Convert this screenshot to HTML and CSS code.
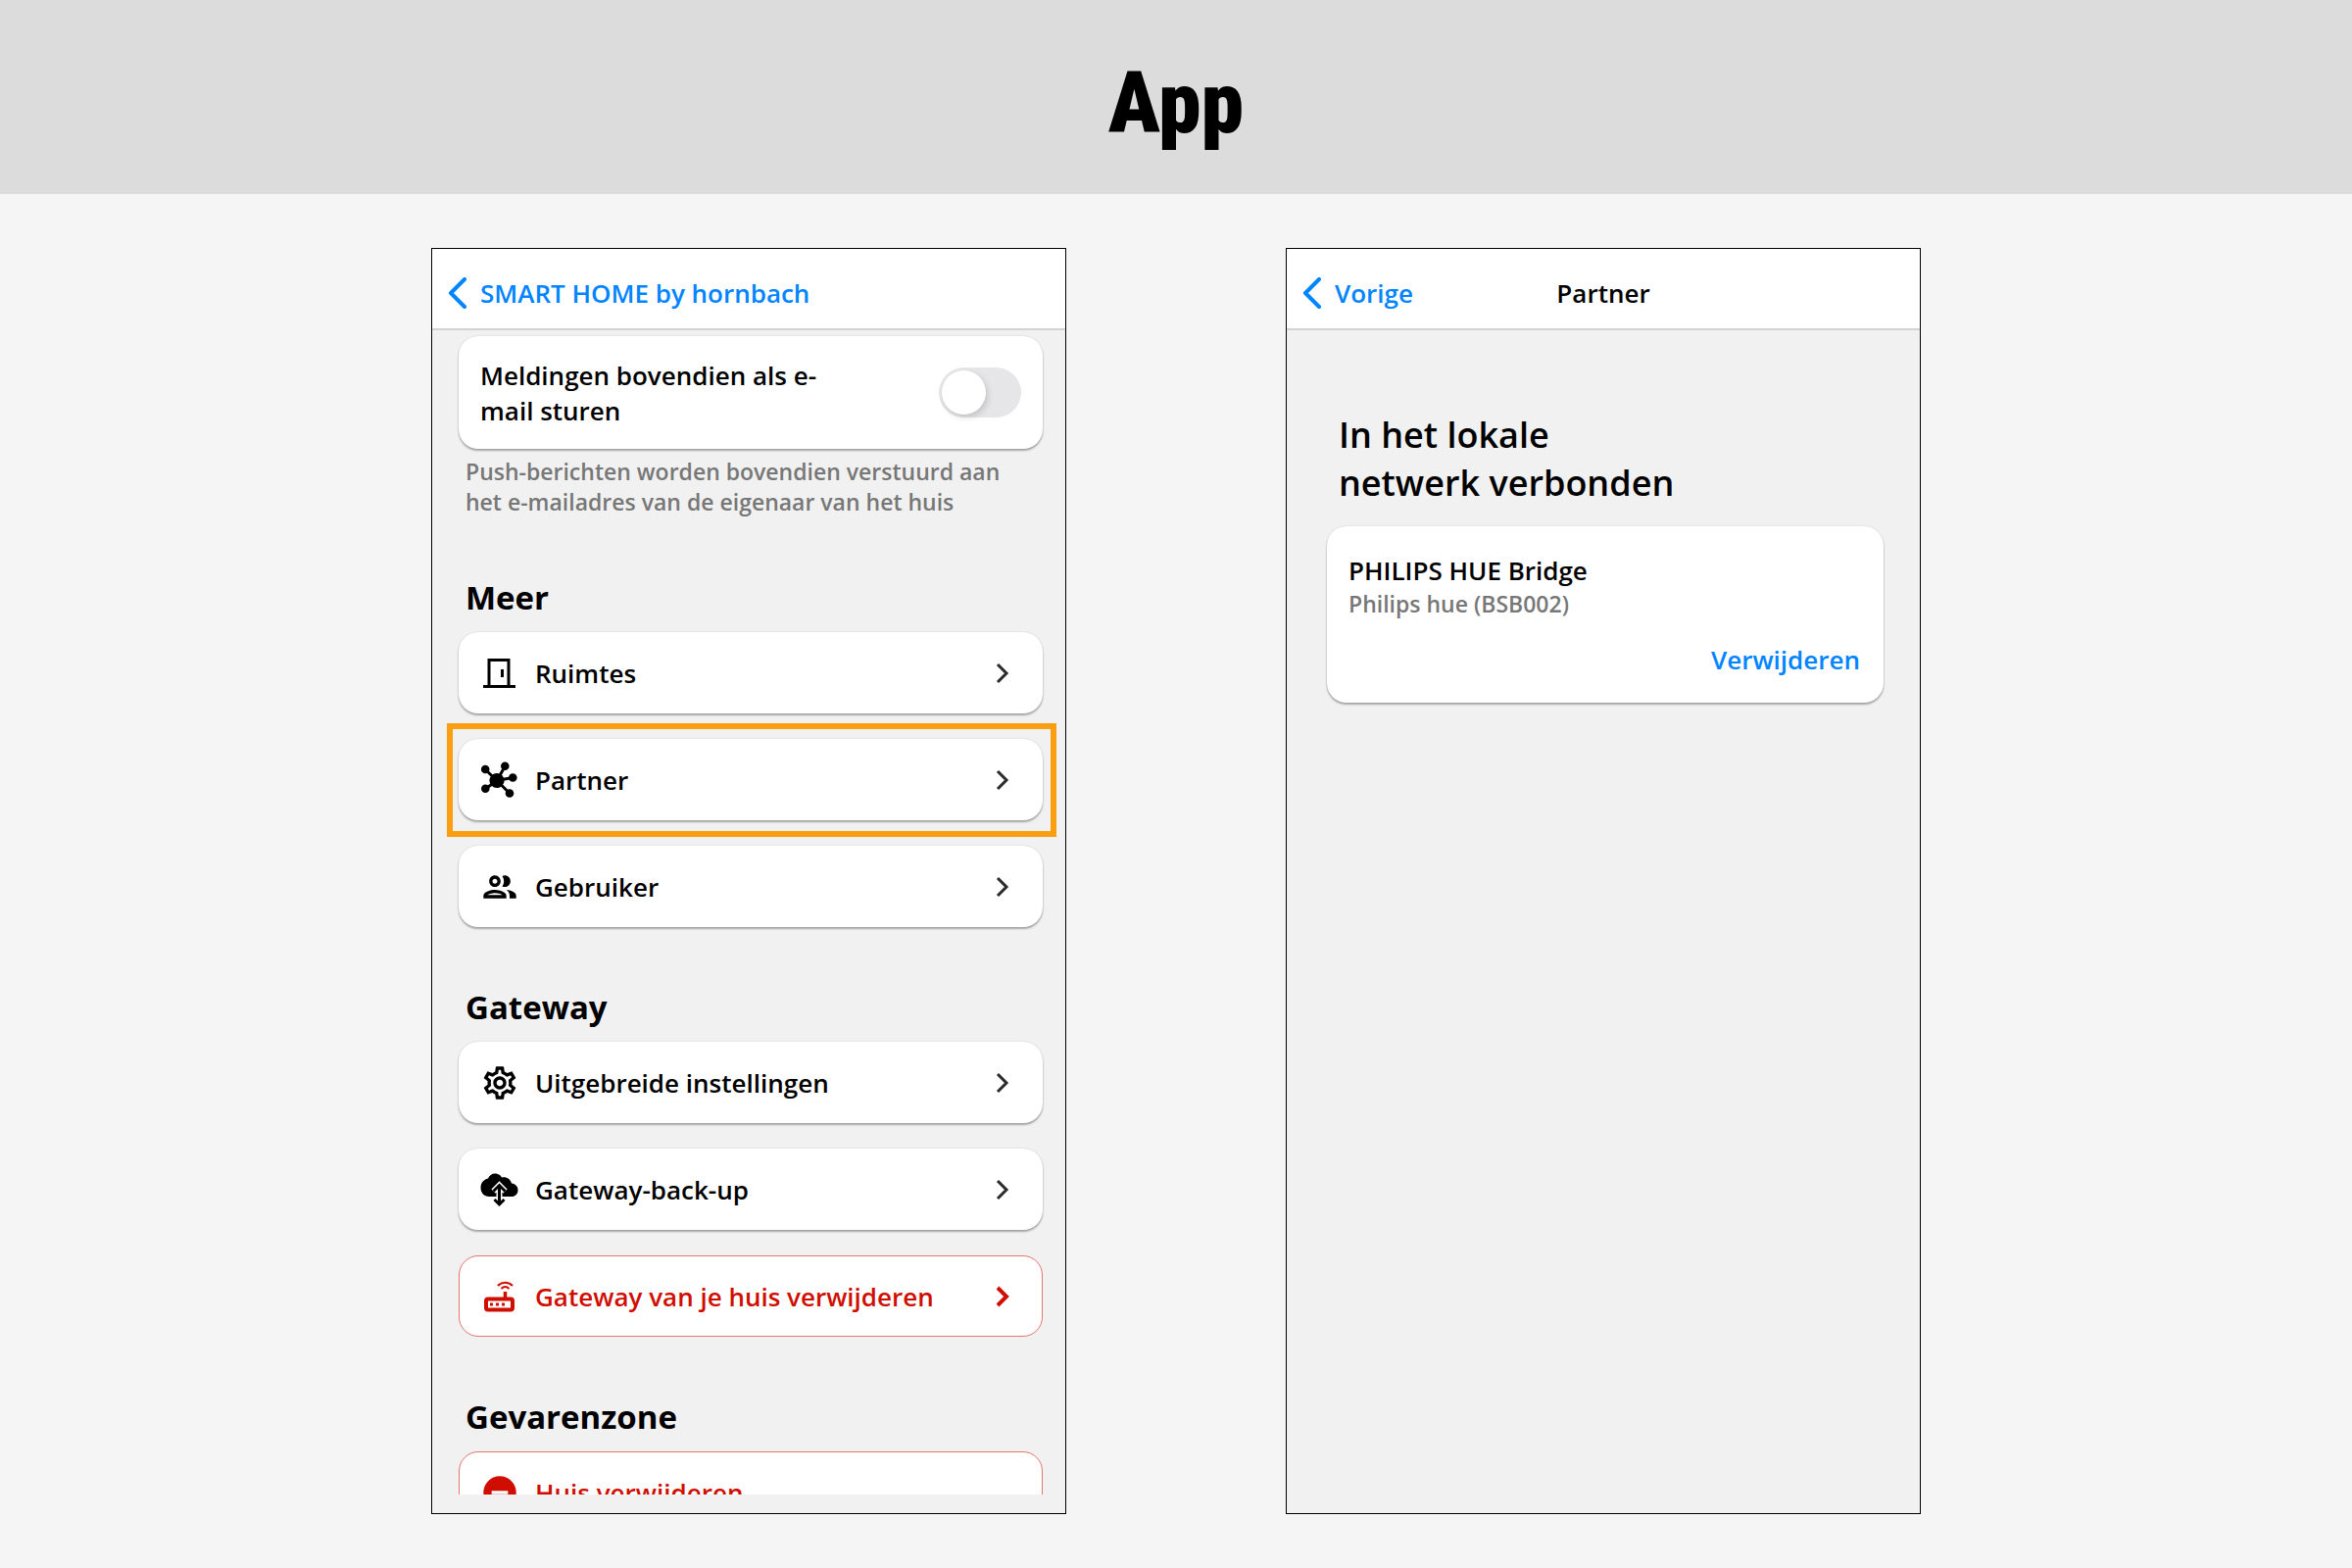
FILE: index.html
```html
<!DOCTYPE html>
<html lang="nl">
<head>
  <meta charset="UTF-8" />
  <meta name="viewport" content="width=device-width, initial-scale=1.0" />
  <title>App</title>
  <link rel="stylesheet" href="styles.css">
</head>
<body>
  <header class="banner">
    <h1>App</h1>
  </header>

  <main class="phones">
    <!-- Settings -->
    <section class="phone">
      <nav class="topbar">
        <a class="back" href="#">
          <svg viewBox="0 0 20 32"><path d="M17 2 3 16l14 14"/></svg>
          SMART HOME by hornbach
        </a>
      </nav>
      <div class="screen">
        <label class="card toggle-card" for="mail">
          <span>Meldingen bovendien als e-<br>mail sturen</span>
          <input type="checkbox" class="switch" id="mail">
        </label>
        <p class="hint">Push-berichten worden bovendien verstuurd aan<br>het e-mailadres van de eigenaar van het huis</p>

        <h2>Meer</h2>
        <div class="rows">
          <a class="card row" href="#">
            <svg class="icon" viewBox="0 0 40 40"><path d="M9 33V6.500h20V33" fill="none" stroke="currentColor" stroke-width="3"/><path d="M3 32h33v3H3zM21 16h3v8h-3z"/></svg>
            <span>Ruimtes</span>
            <svg class="chevron" viewBox="0 0 14 22"><path d="m2 2 9 9-9 9"/></svg>
          </a>
          <a class="card row marked" href="#">
            <svg class="icon" viewBox="0 0 40 40">
              <path d="M5 9 17 20.500 25.300 6M17 20.500 33.300 17.500M5.300 29 17 20.500 30 33.500" fill="none" stroke="currentColor" stroke-width="3"/>
              <circle cx="17" cy="20.500" r="7.600"/><circle cx="5.200" cy="9" r="4.300"/><circle cx="25.300" cy="5.800" r="4.300"/>
              <circle cx="33.300" cy="17.500" r="4.300"/><circle cx="5.300" cy="28.800" r="4.300"/><circle cx="30" cy="33.500" r="4.300"/>
            </svg>
            <span>Partner</span>
            <svg class="chevron" viewBox="0 0 14 22"><path d="m2 2 9 9-9 9"/></svg>
          </a>
          <a class="card row" href="#">
            <svg class="icon" viewBox="0 0 24 24"><path d="M9 13.750c-2.340 0-7 1.170-7 3.500V19h14v-1.750c0-2.330-4.660-3.500-7-3.500zM4.340 17c.84-.58 2.870-1.250 4.660-1.250s3.820.67 4.660 1.250H4.340zM9 12c1.930 0 3.500-1.570 3.500-3.500S10.930 5 9 5 5.500 6.570 5.500 8.500 7.070 12 9 12zm0-5c.83 0 1.500.67 1.500 1.500S9.830 10 9 10s-1.500-.67-1.500-1.500S8.170 7 9 7zm7.040 6.810c1.160.84 1.960 1.960 1.960 3.440V19h4v-1.750c0-2.020-3.500-3.170-5.960-3.440zM15 12c1.930 0 3.500-1.570 3.500-3.500S16.930 5 15 5c-.54 0-1.040.13-1.500.35.63.89 1 1.980 1 3.150s-.37 2.260-1 3.150c.46.22.96.35 1.500.35z"/></svg>
            <span>Gebruiker</span>
            <svg class="chevron" viewBox="0 0 14 22"><path d="m2 2 9 9-9 9"/></svg>
          </a>
        </div>

        <h2>Gateway</h2>
        <div class="rows">
          <a class="card row" href="#">
            <svg class="icon" viewBox="0 0 24 24"><path d="M19.430 12.980c.04-.32.07-.64.07-.98 0-.34-.03-.66-.07-.98l2.110-1.650c.19-.15.24-.42.12-.64l-2-3.460c-.09-.16-.26-.25-.44-.25-.06 0-.12.01-.17.03l-2.490 1c-.52-.4-1.080-.73-1.690-.98l-.38-2.650C14.460 2.180 14.250 2 14 2h-4c-.25 0-.46.18-.49.42l-.38 2.650c-.61.25-1.170.59-1.690.98l-2.490-1c-.06-.02-.12-.03-.18-.03-.17 0-.34.09-.43.25l-2 3.460c-.13.22-.07.49.12.64l2.110 1.650c-.04.32-.07.65-.07.98 0 .33.03.66.07.98l-2.110 1.650c-.19.15-.24.42-.12.64l2 3.460c.09.16.26.25.44.25.06 0 .12-.01.17-.03l2.490-1c.52.4 1.080.73 1.690.98l.38 2.650c.03.24.24.42.49.42h4c.25 0 .46-.18.49-.42l.38-2.650c.61-.25 1.170-.59 1.690-.98l2.490 1c.06.02.12.03.18.03.17 0 .34-.09.43-.25l2-3.460c.12-.22.07-.49-.12-.64l-2.110-1.650zm-1.980-1.710c.04.31.05.52.05.73 0 .21-.02.43-.05.73l-.14 1.130.89.7 1.080.84-.7 1.210-1.270-.51-1.040-.42-.9.68c-.43.32-.84.56-1.250.73l-1.060.43-.16 1.130-.2 1.350h-1.400l-.19-1.350-.16-1.130-1.060-.43c-.43-.18-.83-.41-1.230-.71l-.91-.7-1.060.43-1.270.51-.7-1.210 1.080-.84.89-.7-.14-1.130c-.03-.31-.05-.54-.05-.74s.02-.43.05-.73l.14-1.130-.89-.7-1.080-.84.7-1.210 1.270.51 1.040.42.9-.68c.43-.32.84-.56 1.250-.73l1.060-.43.16-1.130.2-1.350h1.390l.19 1.350.16 1.130 1.060.43c.43.18.83.41 1.230.71l.91.7 1.060-.43 1.270-.51.7 1.210-1.070.85-.89.7.14 1.130zM12 8c-2.210 0-4 1.790-4 4s1.790 4 4 4 4-1.790 4-4-1.790-4-4-4zm0 6c-1.100 0-2-.9-2-2s.9-2 2-2 2 .9 2 2-.9 2-2 2z"/></svg>
            <span>Uitgebreide instellingen</span>
            <svg class="chevron" viewBox="0 0 14 22"><path d="m2 2 9 9-9 9"/></svg>
          </a>
          <a class="card row" href="#">
            <svg class="icon" viewBox="0 0 40 40">
              <path d="M9 27C4 27 .5 23 .5 18 .5 13 3.500 9.500 8 8.500 9 5.500 12 3.500 15 3.500c3 0 5.500 1.500 7 4 5-1 9 2 10 6 4 .5 6.500 3 6.500 7s-3 6.500-6.500 6.500z"/>
              <path d="M19.500 16v18M13.500 21.500l6-6 6 6M14.500 30l5 5 5-5" fill="none" stroke="#fff" stroke-width="6"/>
              <path d="M19.500 16v18M13.500 21.500l6-6 6 6M14.500 30l5 5 5-5" fill="none" stroke="currentColor" stroke-width="3"/>
            </svg>
            <span>Gateway-back-up</span>
            <svg class="chevron" viewBox="0 0 14 22"><path d="m2 2 9 9-9 9"/></svg>
          </a>
          <a class="card row danger" href="#">
            <svg class="icon" viewBox="0 0 40 40">
              <g fill="none" stroke="currentColor"><rect x="6" y="22.500" width="27" height="11" rx="2" stroke-width="4"/><path d="M25.500 22v-7" stroke-width="3.500"/><path d="M18 9c4-4.500 11-4.500 15 0M21.500 12c2.500-2.500 5.500-2.500 8 0" stroke-width="2"/></g>
              <path d="M10 26.500h3v3h-3zM16 26.500h3v3h-3zM22 26.500h3v3h-3z"/>
            </svg>
            <span>Gateway van je huis verwijderen</span>
            <svg class="chevron" viewBox="0 0 14 22"><path d="m2 2 9 9-9 9"/></svg>
          </a>
        </div>

        <h2>Gevarenzone</h2>
        <div class="rows">
          <a class="card row danger" href="#">
            <svg class="icon" viewBox="0 0 24 24"><path d="M12 2a10 10 0 1 0 0 20 10 10 0 0 0 0-20zm5 11H7v-2h10z"/></svg>
            <span>Huis verwijderen</span>
          </a>
        </div>
      </div>
    </section>

    <!-- Partner -->
    <section class="phone">
      <nav class="topbar">
        <a class="back" href="#">
          <svg viewBox="0 0 20 32"><path d="M17 2 3 16l14 14"/></svg>
          Vorige
        </a>
        <span class="topbar-title">Partner</span>
      </nav>
      <div class="screen partner">
        <h2 class="big">In het lokale<br>netwerk verbonden</h2>
        <div class="card device">
          <h3>PHILIPS HUE Bridge</h3>
          <p>Philips hue (BSB002)</p>
          <button type="button">Verwijderen</button>
        </div>
      </div>
    </section>
  </main>
</body>
</html>
```
FILE: styles.css
```css
* {
  box-sizing: border-box;
}
body {
  margin: 0;
  height: 100vh;
  display: flex;
  flex-direction: column;
  background-color: #f5f5f5;
  color: #000;
  font-family: "Open Sans", sans-serif;
  font-size: 26px;
  font-weight: 600;
  line-height: 36px;
}
h1, h2, h3, p {
  margin: 0;
}
a {
  color: inherit;
  text-decoration: none;
}
.banner {
  flex: none;
  height: 198px;
  padding-top: 12px;
  display: flex;
  align-items: center;
  justify-content: center;
  background-color: #dcdcdc;
}
.banner h1 {
  font-family: "Roboto Condensed", Roboto, sans-serif;
  font-size: 88px;
  line-height: 100px;
  font-weight: 900;
}
.phones {
  flex: 1;
  min-height: 0;
  width: 90%;
  max-width: 1520px;
  margin: 0 auto;
  padding: 55px 0;
  display: grid;
  grid-template-columns: 1fr 1fr;
  grid-template-rows: minmax(0, 1fr);
  gap: 224px;
}
.phone {
  display: flex;
  flex-direction: column;
  border: 1px solid #000;
  background-color: #f1f1f1;
  padding-bottom: 19px;
}
.topbar {
  flex: none;
  height: 83px;
  padding: 8px 16px 0;
  display: grid;
  grid-template-columns: 1fr auto 1fr;
  align-items: center;
  background-color: #fff;
  border-bottom: 2px solid #d2d2d2;
}
.back {
  display: flex;
  align-items: center;
  gap: 13px;
  color: #0084ff;
  white-space: nowrap;
}
.back svg {
  width: 20px;
  height: 32px;
  fill: none;
  stroke: currentColor;
  stroke-width: 4;
  stroke-linecap: round;
  stroke-linejoin: round;
}
.screen {
  flex: 1;
  min-height: 0;
  overflow: hidden;
  padding: 6px 23px 0 27px;
}
.card {
  display: block;
  background-color: #fff;
  border-radius: 20px;
  box-shadow: 0 2px 2px rgba(0, 0, 0, 0.3), 0 0 2px rgba(0, 0, 0, 0.15);
}
.toggle-card {
  height: 115px;
  padding: 0 22px;
  display: flex;
  align-items: center;
  justify-content: space-between;
}
.switch {
  appearance: none;
  width: 84px;
  height: 51px;
  margin: 0;
  padding: 3px;
  border-radius: 26px;
  background-color: #e6e6e8;
}
.switch::before {
  content: "";
  display: block;
  width: 45px;
  height: 45px;
  border-radius: 50%;
  background-color: #fff;
  box-shadow: 2px 3px 6px rgba(0, 0, 0, 0.15);
}
.switch:checked {
  background-color: #0084ff;
}
.switch:checked::before {
  margin-left: auto;
}
.hint {
  padding: 8px 7px 0;
  color: #777;
  font-size: 23px;
  line-height: 31px;
}
h2 {
  padding: 0 7px;
  margin: 60px 0 13px;
  font-size: 33px;
  line-height: 44px;
  font-weight: bold;
}
.rows {
  display: grid;
  gap: 26px;
}
.row {
  position: relative;
  height: 83px;
  padding: 0 34px 0 22px;
  display: flex;
  align-items: center;
  gap: 16px;
}
.row span {
  flex: 1;
}
.icon {
  width: 40px;
  height: 40px;
  fill: currentColor;
}
.chevron {
  width: 14px;
  height: 22px;
  fill: none;
  stroke: #2b2b2b;
  stroke-width: 3;
}
.marked::after {
  content: "";
  position: absolute;
  inset: -16px -14px -17px -12px;
  border: 6px solid #f99d11;
}
.danger {
  color: #cf0d00;
  border: 1px solid #e5766c;
  box-shadow: none;
  padding: 0 33px 0 21px;
}
.danger .chevron {
  stroke: #cf0d00;
  stroke-width: 4;
}
.partner {
  padding: 82px 37px 0 41px;
}
.big {
  padding: 0 12px;
  margin: 0 0 20px;
  font-size: 36px;
  line-height: 49px;
  font-weight: 600;
}
.device {
  padding: 27px 24px 26px 22px;
}
.device h3 {
  font-size: 26px;
  font-weight: 600;
}
.device p {
  color: #777;
  font-size: 23px;
  line-height: 32px;
}
.device button {
  display: block;
  margin: 23px 0 0 auto;
  padding: 0;
  border: none;
  background: none;
  color: #0084ff;
  font: inherit;
}
```
